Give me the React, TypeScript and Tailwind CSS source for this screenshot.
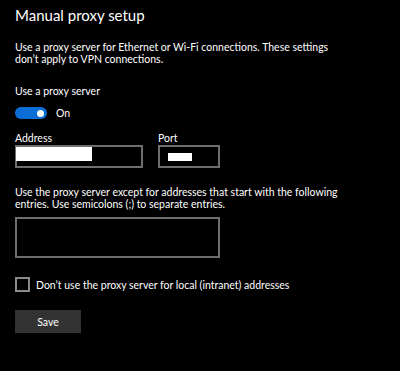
import React from "react";

export default function App() {
  const font = { fontFamily: 'Lato, "Open Sans", sans-serif' };
  return (
    <div className="w-[400px] h-[371px] bg-black text-white overflow-hidden" style={font}>
      <div className="pl-[15px] pt-[5px]">
        <h1 className="text-[15px] leading-[20px] font-normal">Manual proxy setup</h1>
        <p className="mt-[16px] text-[10.5px] leading-[12px] w-[325px]">
          Use a proxy server for Ethernet or Wi-Fi connections. These settings don’t apply to VPN connections.
        </p>
        <div className="mt-[20px] text-[10.5px] leading-[12px]">Use a proxy server</div>
        <div className="mt-[10px] flex items-center gap-[9px]">
          <div className="w-[32px] h-[12px] rounded-full bg-[#0a6ed6] flex items-center justify-end pr-[3px]">
            <div className="w-[7px] h-[7px] rounded-full bg-white" />
          </div>
          <span className="text-[10.5px] leading-[12px]">On</span>
        </div>
        <div className="mt-[13px] flex gap-[15px]">
          <div className="flex flex-col">
            <span className="text-[10.5px] leading-[12px]">Address</span>
            <div className="relative mt-[1px] w-[128px] h-[23px] border-2 border-[#6e6e6e]">
              <div className="absolute left-[-1px] top-[0px] w-[76px] h-[14px] bg-white" />
            </div>
          </div>
          <div className="flex flex-col">
            <span className="text-[10.5px] leading-[12px]">Port</span>
            <div className="mt-[1px] w-[62px] h-[23px] border-2 border-[#6e6e6e] flex items-center pl-[8px]">
              <div className="w-[24px] h-[8px] bg-white" />
            </div>
          </div>
        </div>
        <p className="mt-[18px] text-[10.5px] leading-[12px] w-[325px]">
          Use the proxy server except for addresses that start with the following entries. Use semicolons (;) to separate entries.
        </p>
        <div className="mt-[7px] w-[205px] h-[41px] border-2 border-[#6e6e6e]" />
        <div className="mt-[19px] flex items-center gap-[6px]">
          <div className="w-[15px] h-[15px] border-2 border-[#8a8a8a]" />
          <span className="text-[10.5px] leading-[12px]">Don’t use the proxy server for local (intranet) addresses</span>
        </div>
        <button className="mt-[18px] w-[66px] h-[23px] bg-[#333333] text-[10.5px] leading-[12px] text-white">Save</button>
      </div>
    </div>
  );
}
